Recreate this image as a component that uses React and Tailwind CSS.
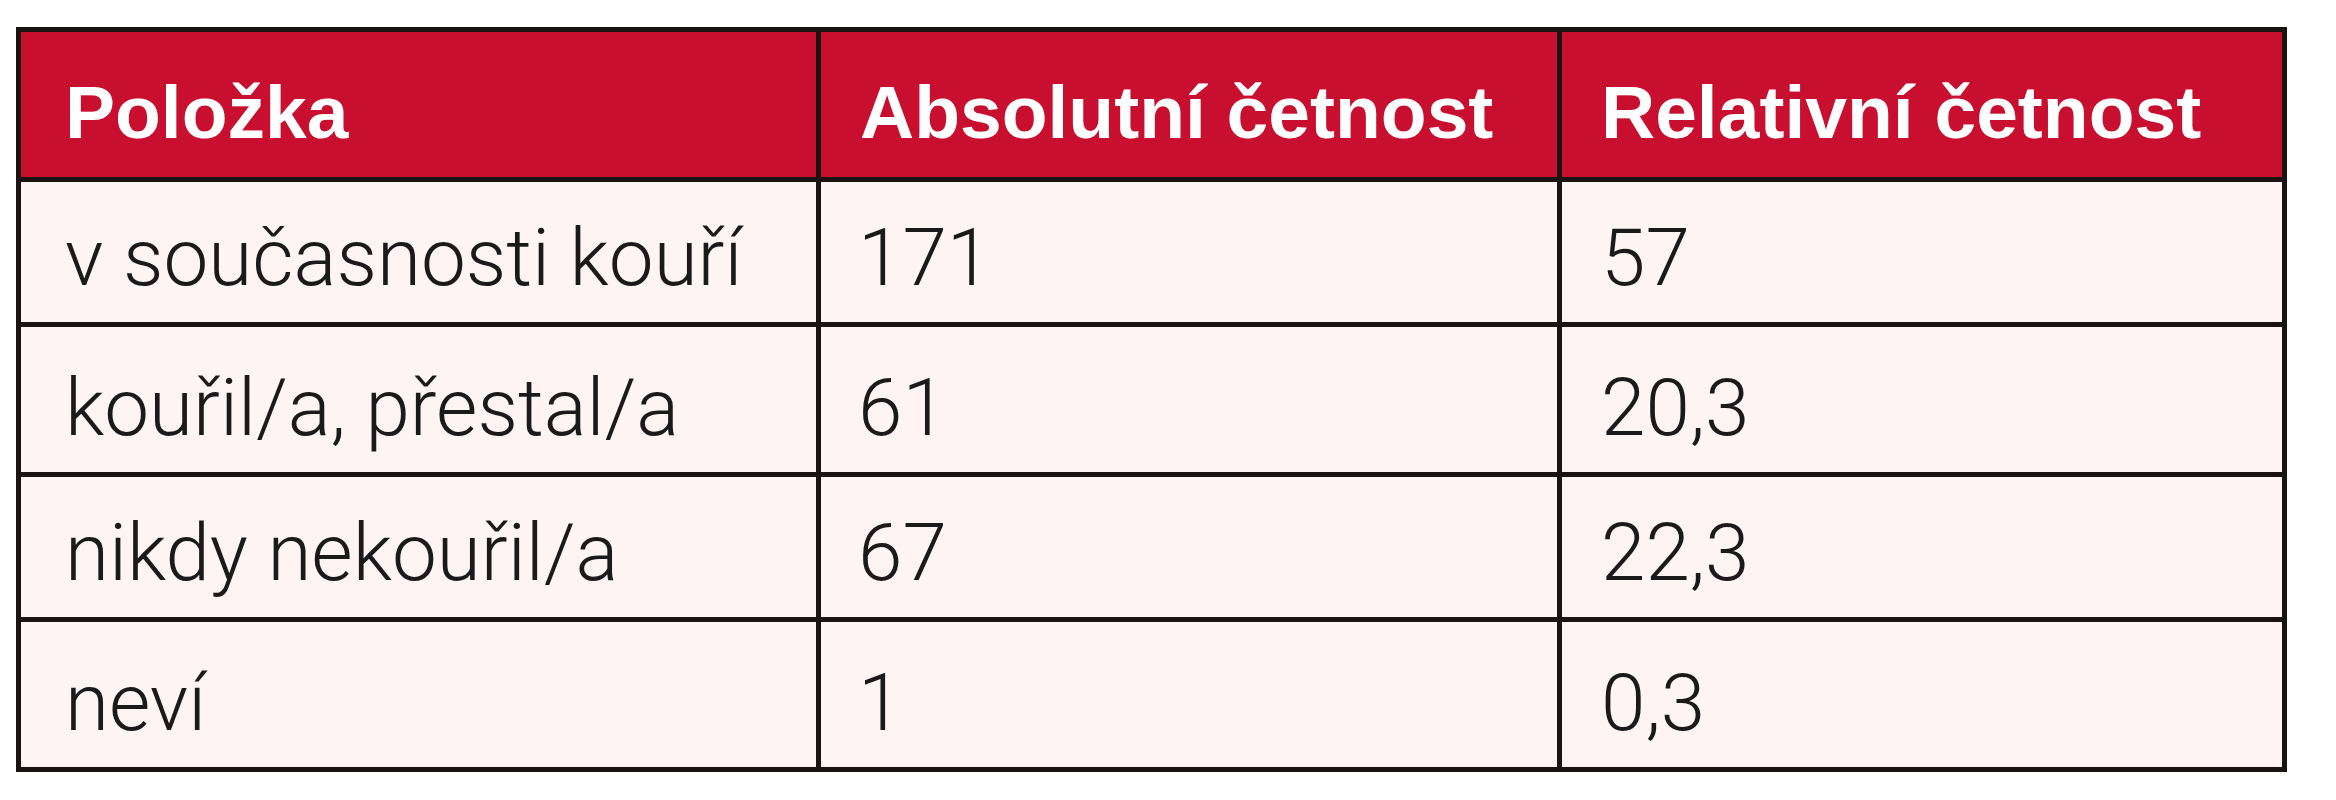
const rows = [
  { item: 'v současnosti kouří', abs: '171', rel: '57' },
  { item: 'kouřil/a, přestal/a', abs: '61', rel: '20,3' },
  { item: 'nikdy nekouřil/a', abs: '67', rel: '22,3' },
  { item: 'neví', abs: '1', rel: '0,3' },
];

export default function App() {
  return (
    <div className="min-h-screen bg-white pl-[16px] pt-[27px]" style={{ fontFamily: '"Liberation Sans", Arial, sans-serif' }}>
      <div className="grid w-[2271px] grid-cols-[795px_736px_720px] grid-rows-[145px_140px_145px_140px_145px] gap-[5px] bg-[#1a1311] p-[5px]">
        {/* header */}
        <div className="flex items-end bg-[#c90f2f] pb-[27px] pl-[44px] text-[75px] font-bold leading-none text-white">Položka</div>
        <div className="flex items-end bg-[#c90f2f] pb-[27px] pl-[39px] text-[75px] font-bold leading-none text-white">Absolutní četnost</div>
        <div className="flex items-end bg-[#c90f2f] pb-[27px] pl-[39px] text-[75px] font-bold leading-none text-white">Relativní četnost</div>

        {rows.map((r) => (
          <>
            <div key={r.item + 'a'} className="flex items-end bg-[#fdf4f3] pb-[24px] pl-[44px] font-['Roboto',sans-serif] text-[80px] font-light leading-none text-[#1a1a1a]">{r.item}</div>
            <div key={r.item + 'b'} className="flex items-end bg-[#fdf4f3] pb-[24px] pl-[37px] font-['Roboto',sans-serif] text-[80px] font-light leading-none text-[#1a1a1a]">{r.abs}</div>
            <div key={r.item + 'c'} className="flex items-end bg-[#fdf4f3] pb-[24px] pl-[39px] font-['Roboto',sans-serif] text-[80px] font-light leading-none text-[#1a1a1a]">{r.rel}</div>
          </>
        ))}
      </div>
    </div>
  );
}
